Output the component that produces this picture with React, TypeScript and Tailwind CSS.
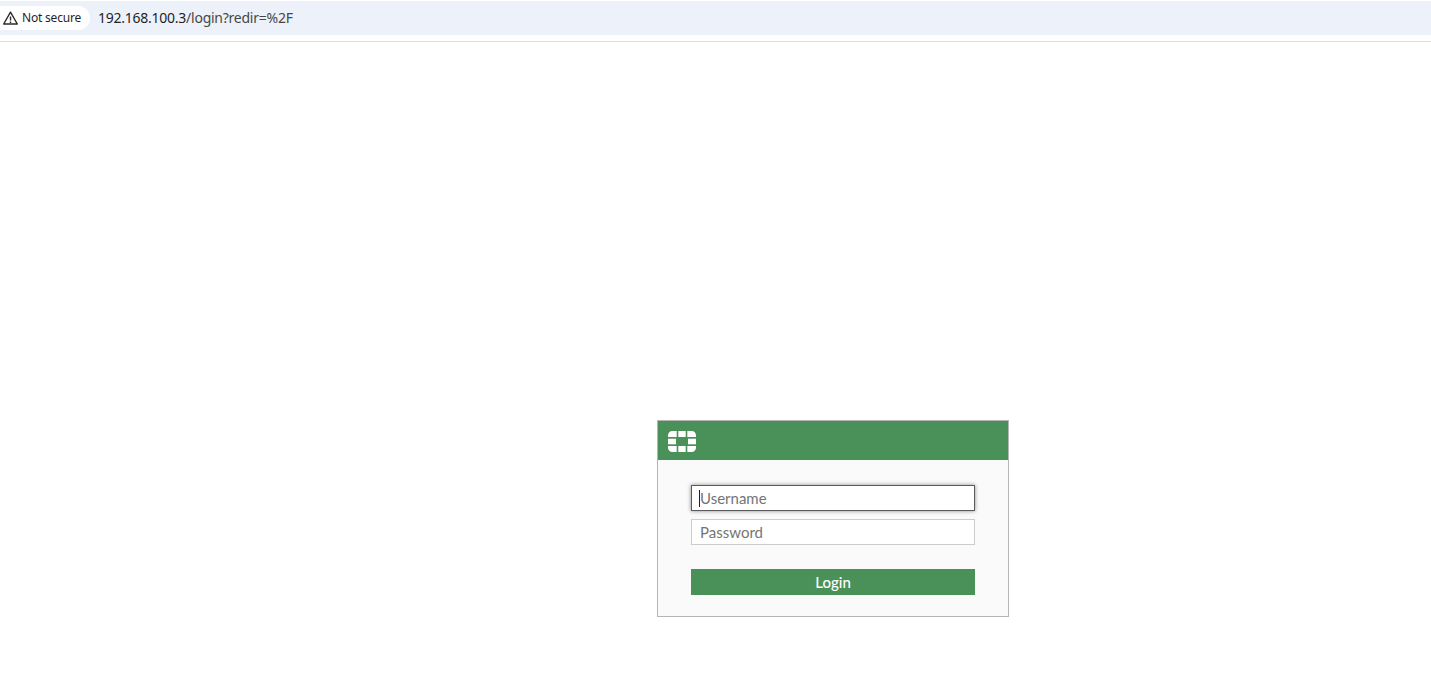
import React from 'react';

const FortinetLogo: React.FC = () => (
  <svg width="28" height="21" viewBox="0 0 28 21" fill="#ffffff">
    <path d="M0 6V4.500C0 1.800 1.800 0 4.500 0H8.700V6Z" />
    <path d="M10.300 0H17.700V6H10.300Z" />
    <path d="M19.300 0H23.500C26.200 0 28 1.800 28 4.500V6H19.300Z" />
    <path d="M0 7.700H8V13.300H0Z" />
    <path d="M20 7.700H28V13.300H20Z" />
    <path d="M0 15H8.700V21H4.500C1.800 21 0 19.200 0 16.500Z" />
    <path d="M10.300 15H17.700V21H10.300Z" />
    <path d="M19.300 15H28V16.500C28 19.200 26.200 21 23.500 21H19.300Z" />
  </svg>
);

const AddressBar: React.FC = () => (
  <div className="h-[42px] border-b border-[#dcdcdc] bg-white pt-px">
    <div className="flex h-[34px] items-center bg-[#edf2fa] font-['Noto_Sans',sans-serif]">
      <div className="flex h-[24px] w-[90px] items-center rounded-r-full bg-white pl-[3px]">
        <svg width="15" height="14" viewBox="0 0 15 14" fill="none" stroke="#2b2b2b" strokeWidth="1.400">
          <path d="M7.500 1.200L14.300 13H0.700Z" strokeLinejoin="round" />
          <path d="M7.500 5.500V9.500M7.500 10.500V12" />
        </svg>
        <span className="ml-1 text-[12px] tracking-[-0.2px] text-[#1f1f1f]">Not secure</span>
      </div>
      <div className="ml-2 pb-[2px] text-[14px] tracking-[-0.25px] text-[#1f1f1f]">
        192.168.100.3<span className="text-[#474747]">/login?redir=%2F</span>
      </div>
    </div>
  </div>
);

const LoginCard: React.FC = () => (
  <div className="ml-[657px] mt-[378px] h-[197px] w-[352px] border border-[#b5b5b5] bg-[#fafafa] font-['Lato',sans-serif]">
    <div className="flex h-[39px] items-center bg-[#4a9159] pl-[10px] pt-[2px]">
      <FortinetLogo />
    </div>
    <div className="flex flex-col px-[33px] pt-[25px]">
      <div className="relative">
        <input
          placeholder="Username"
          className="h-[26px] w-full border border-[#5a5a5a] bg-white px-2 text-[15px] shadow-[0_0_4px_rgba(0,0,0,0.45)] outline-none placeholder:text-[#757575]"
        />
        <span className="absolute left-[8px] top-[5px] h-[17px] w-px bg-[#1f1f1f]" />
      </div>
      <input
        placeholder="Password"
        className="mt-2 h-[26px] w-full border border-[#cccccc] bg-white px-2 text-[15px] outline-none placeholder:text-[#757575]"
      />
      <button className="mt-6 h-[26px] w-full bg-[#4a9159] text-[15px] font-medium text-white">Login</button>
    </div>
  </div>
);

export default function App() {
  return (
    <div className="h-[698px] w-full overflow-hidden bg-white">
      <AddressBar />
      <LoginCard />
    </div>
  );
}
